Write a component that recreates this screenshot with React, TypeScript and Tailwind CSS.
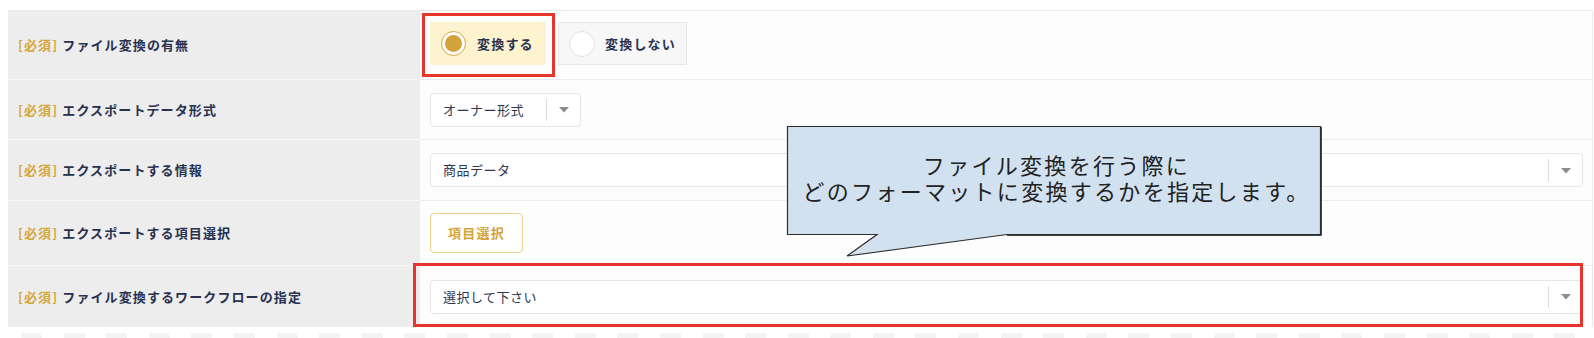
import React from "react";

const FONT = { fontFamily: '"Noto Sans CJK JP", "Noto Sans", sans-serif' };

function Caret() {
  return (
    <svg width="10" height="6" viewBox="0 0 10 6">
      <path d="M0 0 L10 0 L5 5.5 Z" fill="#8c8c8c" />
    </svg>
  );
}

function Select({ text, wide }: { text: string; wide?: boolean }) {
  return (
    <div
      className={`h-[34px] flex items-center bg-white border border-[#e6e6e6] rounded-[4px] ${
        wide ? "w-full" : "w-[151px]"
      }`}
    >
      <div className="flex-1 pl-[12px] text-[13px] text-[#2f3750] tracking-[0.5px]">{text}</div>
      <div className="w-px h-[22px] bg-[#dcdcdc]" />
      <div className="w-[33px] flex items-center justify-center pt-[1px]">
        <Caret />
      </div>
    </div>
  );
}

function Label({ text }: { text: string }) {
  return (
    <div className="text-[13px] font-bold tracking-[1.1px] text-[#28314f]">
      <span className="text-[#d6a637]">[必須]</span> {text}
    </div>
  );
}

function Row({ h, label, children, last }: { h: string; label: string; children: React.ReactNode; last?: boolean }) {
  return (
    <div className={`flex ${h}`}>
      <div
        className={`w-[412px] shrink-0 bg-[#ededed] flex items-center pl-[10px] ${
          last ? "" : "border-b border-[#f6f6f6]"
        }`}
      >
        <Label text={label} />
      </div>
      <div
        className={`flex-1 bg-[#fdfdfd] flex items-center pl-[10px] pr-[9px] border-r border-[#e8e8e8] ${
          last ? "" : "border-b border-[#ececec]"
        }`}
      >
        {children}
      </div>
    </div>
  );
}

export default function App() {
  const dashes = Array.from({ length: 38 });
  return (
    <div className="w-[1594px] h-[338px] bg-white relative overflow-hidden" style={FONT}>
      <div className="pt-[10px] pl-[8px] pr-[1px]">
        <div className="border-t border-[#e9e9e9]">
          <Row h="h-[69px]" label="ファイル変換の有無">
            <div className="flex gap-[12px] pb-[3px]">
              <div className="w-[116px] h-[43px] bg-[#fdf3cf] flex items-center pl-[11px]">
                <div className="w-[25px] h-[25px] rounded-full border-[1.5px] border-[#d6a73d] bg-white flex items-center justify-center">
                  <div className="w-[17px] h-[17px] rounded-full bg-[#d3a33a]" />
                </div>
                <span className="ml-[11px] text-[13px] font-bold tracking-[1.2px] text-[#28314f]">変換する</span>
              </div>
              <div className="w-[129px] h-[43px] bg-[#f7f7f7] border border-[#e6e6e6] flex items-center pl-[10px]">
                <div className="w-[26px] h-[26px] rounded-full border border-[#e2e2e2] bg-white" />
                <span className="ml-[10px] text-[13px] font-bold tracking-[1.2px] text-[#28314f]">変換しない</span>
              </div>
            </div>
          </Row>
          <Row h="h-[60px]" label="エクスポートデータ形式">
            <Select text="オーナー形式" />
          </Row>
          <Row h="h-[61px]" label="エクスポートする情報">
            <Select text="商品データ" wide />
          </Row>
          <Row h="h-[65px]" label="エクスポートする項目選択">
            <div className="w-[93px] h-[40px] border border-[#ebcf8b] rounded-[4px] bg-white flex items-center justify-center text-[13px] font-bold tracking-[1.2px] text-[#d4a43a]">
              項目選択
            </div>
          </Row>
          <Row h="h-[61px]" label="ファイル変換するワークフローの指定" last>
            <Select text="選択して下さい" wide />
          </Row>
        </div>
        <div className="flex gap-[21.6px] pl-[13px] mt-[6px]">
          {dashes.map((_, i) => (
            <div key={i} className="w-[21px] h-[8px] shrink-0 bg-[#f4f4f4]" />
          ))}
        </div>
      </div>

      {/* annotation boxes */}
      <div className="absolute left-[422px] top-[13px] w-[133px] h-[64px] border-[3px] border-[#e8352b]" />
      <div className="absolute left-[413px] top-[263px] w-[1170px] h-[64px] border-[3px] border-[#e8352b]" />

      {/* callout */}
      <svg className="absolute left-0 top-0" width="1594" height="338">
        <path
          d="M787.5 126.5 H1320.5 V234.5 H1007 L847 256 L877 234.5 H787.5 Z"
          fill="#d2e1f0"
          stroke="#2e2e2e"
          strokeWidth="1.2"
        />
        <path d="M1321.5 127 V235.5 H1007" fill="none" stroke="#444" strokeWidth="1" />
      </svg>
      <div className="absolute left-[790px] top-[123px] w-[533px] h-[108px] flex items-center justify-center">
        <p className="text-center text-[22px] leading-[26px] tracking-[2.3px] text-[#222]" style={FONT}>
          ファイル変換を行う際に
          <br />
          どのフォーマットに変換するかを指定します。
        </p>
      </div>
    </div>
  );
}
